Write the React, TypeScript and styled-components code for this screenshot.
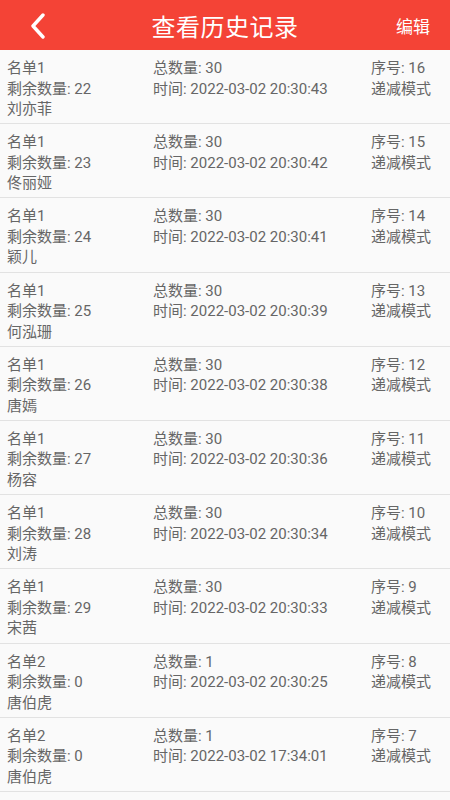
import React from 'react'
import styled, { createGlobalStyle } from 'styled-components'

interface Record {
  list: string
  remain: number
  total: number
  time: string
  no: number
  name: string
}

const records: Record[] = [
  { list: '名单1', remain: 22, total: 30, time: '2022-03-02 20:30:43', no: 16, name: '刘亦菲' },
  { list: '名单1', remain: 23, total: 30, time: '2022-03-02 20:30:42', no: 15, name: '佟丽娅' },
  { list: '名单1', remain: 24, total: 30, time: '2022-03-02 20:30:41', no: 14, name: '颖儿' },
  { list: '名单1', remain: 25, total: 30, time: '2022-03-02 20:30:39', no: 13, name: '何泓珊' },
  { list: '名单1', remain: 26, total: 30, time: '2022-03-02 20:30:38', no: 12, name: '唐嫣' },
  { list: '名单1', remain: 27, total: 30, time: '2022-03-02 20:30:36', no: 11, name: '杨容' },
  { list: '名单1', remain: 28, total: 30, time: '2022-03-02 20:30:34', no: 10, name: '刘涛' },
  { list: '名单1', remain: 29, total: 30, time: '2022-03-02 20:30:33', no: 9, name: '宋茜' },
  { list: '名单2', remain: 0, total: 1, time: '2022-03-02 20:30:25', no: 8, name: '唐伯虎' },
  { list: '名单2', remain: 0, total: 1, time: '2022-03-02 17:34:01', no: 7, name: '唐伯虎' },
]

const GlobalStyle = createGlobalStyle`
  html, body {
    margin: 0;
    padding: 0;
    background: #fafafa;
  }
  body {
    font-family: Roboto, "Noto Sans CJK SC", sans-serif;
    overflow: hidden;
  }
`

const App: React.FC = () => {
  return (
    <Page>
      <GlobalStyle />
      <Header>
        <Back>
          <svg width="18" height="26" viewBox="0 0 18 26">
            <path d="M14 2 L4 13 L14 24" fill="none" stroke="#fff" strokeWidth="3.4" strokeLinecap="round" strokeLinejoin="round" />
          </svg>
        </Back>
        <Title>查看历史记录</Title>
        <Edit>编辑</Edit>
      </Header>
      <List>
        {records.map((r) => (
          <Row key={r.no}>
            <Col>
              <span>{r.list}</span>
              <span>剩余数量: {r.remain}</span>
              <span>{r.name}</span>
            </Col>
            <Col>
              <span>总数量: {r.total}</span>
              <span>时间: {r.time}</span>
            </Col>
            <Col>
              <span>序号: {r.no}</span>
              <span>递减模式</span>
            </Col>
          </Row>
        ))}
      </List>
    </Page>
  )
}

const Page = styled.div`
  width: 450px;
  height: 800px;
  background: #fafafa;
  overflow: hidden;
`
const Header = styled.div`
  height: 50px;
  background: #f44336;
  display: grid;
  grid-template-columns: 80px 1fr 80px;
  align-items: center;
  color: #fff;
`
const Back = styled.div`
  display: flex;
  align-items: center;
  padding-left: 29px;
  padding-top: 1px;
`
const Title = styled.div`
  text-align: center;
  font-size: 24px;
  font-family: "Noto Sans CJK SC", sans-serif;
  letter-spacing: 0.5px;
`
const Edit = styled.div`
  text-align: right;
  padding-right: 20px;
  font-size: 17px;
  font-family: "Noto Sans CJK SC", sans-serif;
`
const List = styled.div`
  display: flex;
  flex-direction: column;
`
const Row = styled.div`
  display: grid;
  grid-template-columns: 146px 218px 1fr;
  padding: 8px 0 3.7px 7px;
  border-bottom: 1px solid #e2e2e2;
  font-size: 15px;
  line-height: 20.5px;
  color: #666;
`
const Col = styled.div`
  display: flex;
  flex-direction: column;
  white-space: nowrap;
`

export default App
